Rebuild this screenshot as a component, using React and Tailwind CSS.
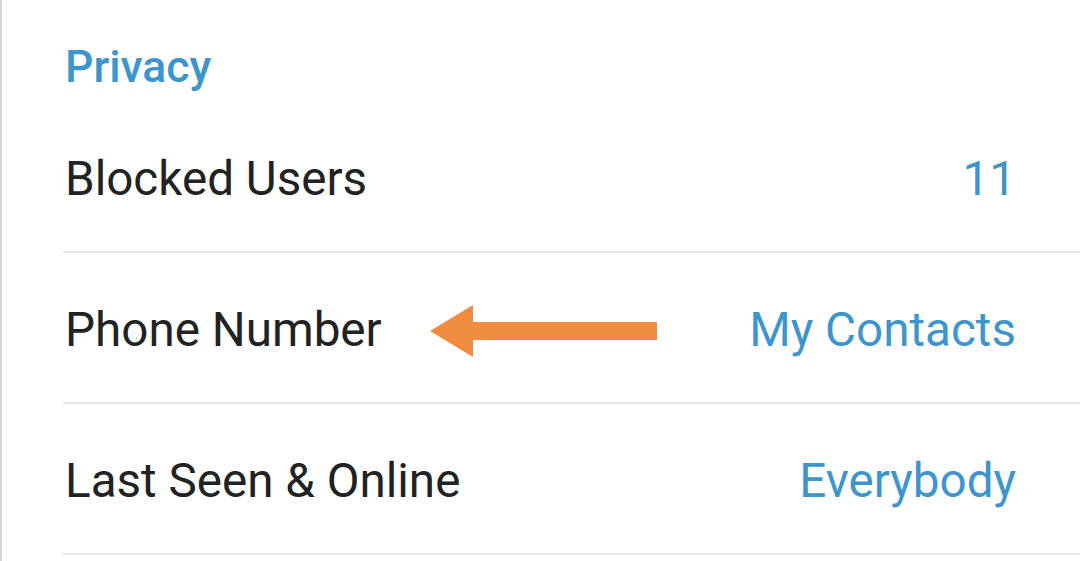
export default function App() {
  const font = { fontFamily: 'Roboto, "Noto Sans", sans-serif' };
  const rows = [
    { label: "Blocked Users", value: "11" },
    { label: "Phone Number", value: "My Contacts", arrow: true },
    { label: "Last Seen & Online", value: "Everybody" },
  ];
  return (
    <div className="w-[1080px] h-[561px] bg-white border-l-2 border-[#d6d6d6] overflow-hidden" style={font}>
      <div className="pl-[63px] pt-[41px] h-[102px]">
        <div className="text-[44.5px] leading-[52px] font-medium text-[#3d95ce]">Privacy</div>
      </div>
      {rows.map((r) => (
        <div key={r.label} className="ml-[61px] h-[151px] border-b-2 border-[#e6e6e6] flex items-center pr-[64px]">
          <div className="text-[47.6px] text-[#222222] leading-none pl-[2px] pt-[6px]">{r.label}</div>
          {r.arrow && (
            <svg width="228" height="54" viewBox="0 0 228 54" className="ml-[47px] mt-[6px]">
              <polygon points="1,27 44,1 44,18 228,18 228,36 44,36 44,53" fill="#f08b40" />
            </svg>
          )}
          <div className="ml-auto text-[47.6px] text-[#3d95ce] leading-none pt-[6px]">{r.value}</div>
        </div>
      ))}
    </div>
  );
}
